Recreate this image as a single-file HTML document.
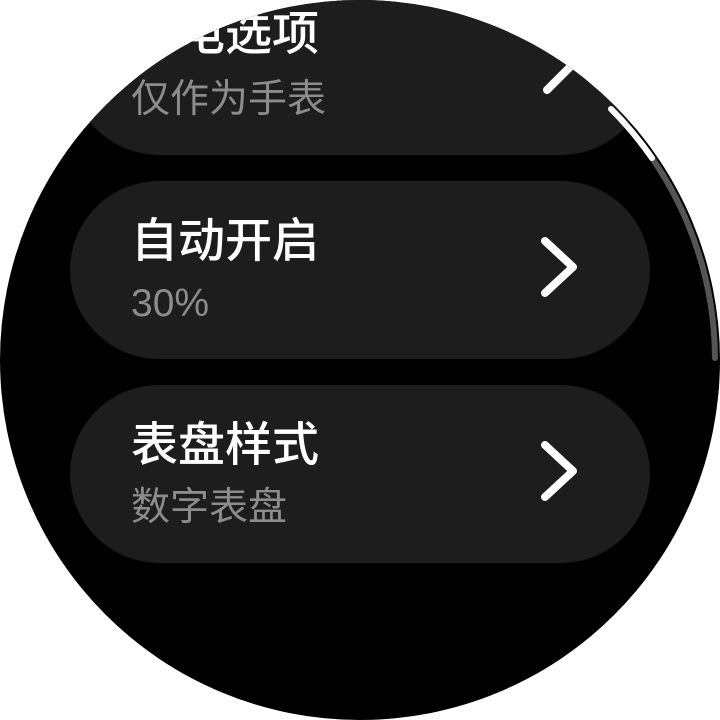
<!DOCTYPE html>
<html><head><meta charset="utf-8"><style>
html,body{margin:0;padding:0;background:#fff;}
#s{position:relative;width:720px;height:720px;border-radius:50%;background:#000;overflow:hidden;font-family:"Liberation Sans","Noto Sans CJK SC",sans-serif;}
.c{position:absolute;left:70px;width:580px;height:178px;border-radius:89px;background:#1d1d1d;}
.t{position:absolute;left:61px;font-size:47px;color:#fff;line-height:1;font-weight:500;}
.u{position:absolute;left:61px;font-size:39px;color:#8c8c8c;line-height:1;}
.ch{position:absolute;}
</style></head><body>
<div id="s">
<div class="c" style="top:-23px"><div class="t" style="top:33px">省电选项</div><div class="u" style="top:103px">仅作为手表</div></div>
<div class="c" style="top:181px"><div class="t" style="top:36px">自动开启</div><div class="u" style="top:103px">30%</div>
<svg class="ch" width="50" height="80" style="top:50px;left:465px"><path d="M10 10 L38 36 L10 62" stroke="#fff" stroke-width="8" stroke-linecap="round" stroke-linejoin="round" fill="none"/></svg></div>
<div class="c" style="top:385px"><div class="t" style="top:36px">表盘样式</div><div class="u" style="top:103px">数字表盘</div>
<svg class="ch" width="50" height="80" style="top:50px;left:465px"><path d="M10 10 L38 36 L10 62" stroke="#fff" stroke-width="8" stroke-linecap="round" stroke-linejoin="round" fill="none"/></svg></div>
<svg width="720" height="720" style="position:absolute;left:0;top:0">
<path d="M575 62 L547 90" stroke="#fff" stroke-width="8" stroke-linecap="round" fill="none"/>
<path d="M611 109 A355 355 0 0 1 715 358" stroke="#555" stroke-width="6" stroke-linecap="round" fill="none"/>
<path d="M611 109 A355 355 0 0 1 652 158" stroke="#fff" stroke-width="6" stroke-linecap="round" fill="none"/>
</svg>
</div>
</body></html>
